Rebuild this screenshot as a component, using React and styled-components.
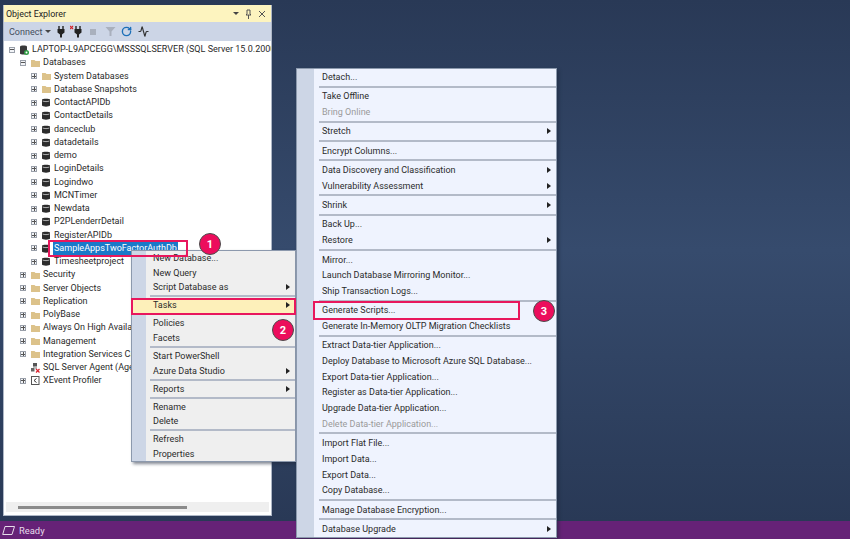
import React from 'react';
import styled, { createGlobalStyle } from 'styled-components';
import { RotateCw, Activity } from 'lucide-react';

const GlobalStyle = createGlobalStyle`
  html, body { margin: 0; padding: 0; height: 100%; overflow: hidden; }
  body { font-family: 'Roboto', 'Open Sans', sans-serif; }
`;

const Page = styled.div`
  position: relative;
  width: 850px;
  height: 539px;
  display: flex;
  flex-direction: column;
  overflow: hidden;
  background: linear-gradient(to bottom, #293956 0, #364b6d 250px, #293956 521px);
`;

const Workspace = styled.div`
  flex: 1;
  min-height: 0;
  padding: 5px 0 5px 3px;
`;

const StatusBar = styled.div`
  height: 18px;
  flex-shrink: 0;
  display: flex;
  align-items: center;
  gap: 4px;
  padding-left: 2px;
  background: #662277;
  color: #e6dcea;
  font-size: 9.4px;
`;

const Panel = styled.div`
  width: 269px;
  height: 100%;
  box-sizing: border-box;
  display: flex;
  flex-direction: column;
  overflow: hidden;
  background: #fff;
  border: 1px solid #aeb7c6;
  border-top: none;
`;

const TitleBar = styled.div`
  height: 17px;
  flex-shrink: 0;
  display: flex;
  align-items: center;
  justify-content: space-between;
  padding: 0 5px 0 2px;
  background: #fdf4bf;
  color: #222;
  font-size: 8.9px;
`;

const TitleButtons = styled.div`
  display: flex;
  align-items: center;
  gap: 6px;
`;

const Toolbar = styled.div`
  height: 19px;
  flex-shrink: 0;
  display: flex;
  align-items: center;
  padding-left: 5px;
  background: #ccd5e6;
  color: #444d5c;
  font-size: 9px;
`;

const ConnectLabel = styled.span`
  width: 43px;
  display: flex;
  align-items: center;
  gap: 3px;
`;

const ToolSlot = styled.span`
  width: 16.6px;
  display: flex;
  align-items: center;
  justify-content: center;
`;

const DropCaret = styled.span`
  width: 0;
  height: 0;
  border-top: 3px solid #444;
  border-left: 3px solid transparent;
  border-right: 3px solid transparent;
`;

const Tree = styled.div`
  flex: 1;
  min-height: 0;
  padding-top: 2px;
  overflow: hidden;
`;

const Row = styled.div`
  height: 13.25px;
  display: flex;
  align-items: center;
  padding-left: ${p => 5 + p.$level * 11}px;
  white-space: nowrap;
  color: #2a2a2a;
  font-size: 9px;
`;

const Expander = styled.span`
  width: 6px;
  height: 6px;
  flex-shrink: 0;
  position: relative;
  box-sizing: border-box;
  border: 1px solid #9aa0aa;
  background: #f2f4f7;
  margin-right: 5px;
  &::before {
    content: '';
    position: absolute;
    left: 0;
    right: 0;
    top: 1.5px;
    height: 1px;
    background: #555;
  }
  &::after {
    content: '';
    display: ${p => (p.$open ? 'none' : 'block')};
    position: absolute;
    top: 0;
    bottom: 0;
    left: 1.5px;
    width: 1px;
    background: #555;
  }
`;

const ExpanderGap = styled.span`
  width: 11px;
  flex-shrink: 0;
`;

const IconSlot = styled.span`
  width: 9px;
  height: 10px;
  flex-shrink: 0;
  margin-right: 2px;
  display: flex;
  align-items: center;
`;

const RowLabel = styled.span`
  padding: 0 1px;
  line-height: 13px;
  ${p => p.$selected && 'background: #1a79c9; color: #fff;'}
`;

const ScrollTrack = styled.div`
  height: 10px;
  flex-shrink: 0;
  margin: 0 2px 3px;
  display: flex;
  align-items: center;
  padding-left: 12px;
  background: #efefef;
`;

const ScrollThumb = styled.div`
  width: 169px;
  height: 3px;
  background: #8b8b8b;
`;

const Menu = styled.div`
  position: absolute;
  left: ${p => p.$left}px;
  top: ${p => p.$top}px;
  width: ${p => p.$width}px;
  box-sizing: border-box;
  color: #2b2b2b;
  font-size: 9px;
  border: 1px solid #8c99ad;
  box-shadow: 2px 2px 3px rgba(30, 40, 60, 0.55);
  background: linear-gradient(
    to right,
    #cdd6e6 0,
    #cdd6e6 ${p => p.$gutter}px,
    ${p => p.$bg} ${p => p.$gutter}px
  );
`;

const MenuItem = styled.div`
  height: ${p => p.$height}px;
  display: flex;
  align-items: center;
  justify-content: space-between;
  box-sizing: border-box;
  padding: 0 5px 0 ${p => p.$indent}px;
  white-space: nowrap;
  color: ${p => (p.$disabled ? '#9a9a9a' : 'inherit')};
  ${p => p.$active && 'background: #fdf0ba;'}
`;

const Separator = styled.div`
  height: 2px;
  margin: ${p => p.$gap}px 0 ${p => p.$gap}px ${p => p.$indent}px;
  background: #b3bac8;
`;

const Arrow = styled.span`
  width: 0;
  height: 0;
  border-left: 4px solid #222;
  border-top: 3.5px solid transparent;
  border-bottom: 3.5px solid transparent;
`;

const Callout = styled.div`
  position: absolute;
  left: ${p => p.$left}px;
  top: ${p => p.$top}px;
  width: ${p => p.$width}px;
  height: ${p => p.$height}px;
  box-sizing: border-box;
  border: 2px solid #e8175d;
  pointer-events: none;
`;

const Badge = styled.div`
  position: absolute;
  left: ${p => p.$x - 11}px;
  top: ${p => p.$y - 11}px;
  width: 22px;
  height: 22px;
  box-sizing: border-box;
  display: flex;
  align-items: center;
  justify-content: center;
  border-radius: 50%;
  border: 1.5px solid #4b4b4b;
  background: #ec0d5c;
  color: #fff;
  font-size: 11px;
  font-weight: 700;
`;

const Folder = () => (
  <svg width="9" height="8" viewBox="0 0 9 8">
    <path d="M0 1h3.5l1 1H9v6H0z" fill="#dcc28a" />
  </svg>
);

const Cylinder = () => (
  <svg width="8" height="9" viewBox="0 0 8 9">
    <path d="M0 1.6C0 .6 8 .6 8 1.6v6c0 1.4-8 1.4-8 0z" fill="#2c2c2c" />
    <path d="M.6 3c1.5.8 5.3.8 6.8 0" fill="none" stroke="#e8e8e8" strokeWidth=".7" />
  </svg>
);

const ServerIcon = () => (
  <svg width="9" height="10" viewBox="0 0 9 10">
    <path d="M0 1.5C0 .3 7 .3 7 1.5v7c0 1.3-7 1.3-7 0z" fill="#3a3a3a" />
    <circle cx="6.5" cy="7.5" r="2.5" fill="#2f9e44" />
    <circle cx="6.5" cy="7.5" r="1" fill="#fff" />
  </svg>
);

const AgentIcon = () => (
  <svg width="9" height="10" viewBox="0 0 9 10">
    <rect x="2" y="0" width="4" height="3.5" fill="#555" />
    <rect x="0" y="5" width="3.5" height="3.5" fill="#666" />
    <path d="M3 3.5v1.5M4 5h2" stroke="#555" strokeWidth=".8" />
    <path d="M5 6l3.5 3.5M8.5 6L5 9.5" stroke="#d9232e" strokeWidth="1.2" />
  </svg>
);

const ProfilerIcon = () => (
  <svg width="9" height="9" viewBox="0 0 9 9">
    <rect x=".5" y=".5" width="7.5" height="8" fill="#fff" stroke="#555" />
    <path d="M5.5 2.5L3 4.5l2.5 2" fill="none" stroke="#333" />
  </svg>
);

const Plug = ({ cut }) => (
  <svg width="14" height="13" viewBox="0 0 14 13">
    {cut && <path d="M0 1l3 3M3 1L0 4" stroke="#d3222a" strokeWidth="1.1" />}
    <path d="M6 1v3M10 1v3" stroke="#222" strokeWidth="1.4" />
    <path d="M4.5 4h7v3.5L9 9.5v3H7v-3L4.5 7.5z" fill="#222" />
  </svg>
);

const StopIcon = () => (
  <svg width="8" height="8" viewBox="0 0 8 8">
    <rect x="1" y="1" width="6" height="6" fill="#a9b0bd" />
  </svg>
);

const FilterIcon = () => (
  <svg width="11" height="11" viewBox="0 0 11 11">
    <path d="M.5 1h10L6.5 5.5V10h-2V5.5z" fill="#a9b0bd" />
  </svg>
);

const PinIcon = () => (
  <svg width="7" height="10" viewBox="0 0 7 10">
    <path d="M2 1h3v4l1 1H1l1-1zM3.5 6v4" fill="none" stroke="#555" />
  </svg>
);

const CloseIcon = () => (
  <svg width="8" height="8" viewBox="0 0 8 8">
    <path d="M1 1l6 6M7 1L1 7" stroke="#555" strokeWidth="1" />
  </svg>
);

const ReadyIcon = () => (
  <svg width="13" height="11" viewBox="0 0 13 11">
    <path d="M3 1.5h9.5L10 9.5H.7z" fill="none" stroke="#e6dcea" />
  </svg>
);

const icons = { folder: Folder, db: Cylinder, server: ServerIcon, agent: AgentIcon, profiler: ProfilerIcon };

const treeRows = [
  { level: 0, icon: 'server', label: 'LAPTOP-L9APCEGG\\MSSSQLSERVER (SQL Server 15.0.2000.5 - LAPTOP', open: true },
  { level: 1, icon: 'folder', label: 'Databases', open: true },
  { level: 2, icon: 'folder', label: 'System Databases' },
  { level: 2, icon: 'folder', label: 'Database Snapshots' },
  { level: 2, icon: 'db', label: 'ContactAPIDb' },
  { level: 2, icon: 'db', label: 'ContactDetails' },
  { level: 2, icon: 'db', label: 'danceclub' },
  { level: 2, icon: 'db', label: 'datadetails' },
  { level: 2, icon: 'db', label: 'demo' },
  { level: 2, icon: 'db', label: 'LoginDetails' },
  { level: 2, icon: 'db', label: 'Logindwo' },
  { level: 2, icon: 'db', label: 'MCNTimer' },
  { level: 2, icon: 'db', label: 'Newdata' },
  { level: 2, icon: 'db', label: 'P2PLenderrDetail' },
  { level: 2, icon: 'db', label: 'RegisterAPIDb' },
  { level: 2, icon: 'db', label: 'SampleAppsTwoFactorAuthDb', selected: true },
  { level: 2, icon: 'db', label: 'Timesheetproject' },
  { level: 1, icon: 'folder', label: 'Security' },
  { level: 1, icon: 'folder', label: 'Server Objects' },
  { level: 1, icon: 'folder', label: 'Replication' },
  { level: 1, icon: 'folder', label: 'PolyBase' },
  { level: 1, icon: 'folder', label: 'Always On High Availability' },
  { level: 1, icon: 'folder', label: 'Management' },
  { level: 1, icon: 'folder', label: 'Integration Services Catalogs' },
  { level: 1, icon: 'agent', label: 'SQL Server Agent (Agent XPs disabled)', leaf: true },
  { level: 1, icon: 'profiler', label: 'XEvent Profiler' },
];

const SEP = { sep: true };

const dbMenu = [
  { label: 'New Database...' },
  { label: 'New Query' },
  { label: 'Script Database as', sub: true },
  SEP,
  { label: 'Tasks', sub: true, active: true },
  SEP,
  { label: 'Policies' },
  { label: 'Facets' },
  SEP,
  { label: 'Start PowerShell' },
  { label: 'Azure Data Studio', sub: true },
  SEP,
  { label: 'Reports', sub: true },
  SEP,
  { label: 'Rename' },
  { label: 'Delete' },
  SEP,
  { label: 'Refresh' },
  { label: 'Properties' },
];

const tasksMenu = [
  { label: 'Detach...' },
  SEP,
  { label: 'Take Offline' },
  { label: 'Bring Online', disabled: true },
  SEP,
  { label: 'Stretch', sub: true },
  SEP,
  { label: 'Encrypt Columns...' },
  SEP,
  { label: 'Data Discovery and Classification', sub: true },
  { label: 'Vulnerability Assessment', sub: true },
  SEP,
  { label: 'Shrink', sub: true },
  SEP,
  { label: 'Back Up...' },
  { label: 'Restore', sub: true },
  SEP,
  { label: 'Mirror...' },
  { label: 'Launch Database Mirroring Monitor...' },
  { label: 'Ship Transaction Logs...' },
  SEP,
  { label: 'Generate Scripts...' },
  { label: 'Generate In-Memory OLTP Migration Checklists' },
  SEP,
  { label: 'Extract Data-tier Application...' },
  { label: 'Deploy Database to Microsoft Azure SQL Database...' },
  { label: 'Export Data-tier Application...' },
  { label: 'Register as Data-tier Application...' },
  { label: 'Upgrade Data-tier Application...' },
  { label: 'Delete Data-tier Application...', disabled: true },
  SEP,
  { label: 'Import Flat File...' },
  { label: 'Import Data...' },
  { label: 'Export Data...' },
  { label: 'Copy Database...' },
  SEP,
  { label: 'Manage Database Encryption...' },
  SEP,
  { label: 'Database Upgrade', sub: true },
];

const ContextMenu = ({ items, left, top, width, gutter, bg, itemHeight, indent, sepIndent, sepGap }) => (
  <Menu $left={left} $top={top} $width={width} $gutter={gutter} $bg={bg}>
    {items.map((item, i) =>
      item.sep ? (
        <Separator key={i} $indent={sepIndent} $gap={sepGap} />
      ) : (
        <MenuItem key={i} $height={itemHeight} $indent={indent} $disabled={item.disabled} $active={item.active}>
          {item.label}
          {item.sub && <Arrow />}
        </MenuItem>
      )
    )}
  </Menu>
);

const App = () => (
  <Page>
    <GlobalStyle />
    <Workspace>
      <Panel>
        <TitleBar>
          Object Explorer
          <TitleButtons>
            <DropCaret />
            <PinIcon />
            <CloseIcon />
          </TitleButtons>
        </TitleBar>
        <Toolbar>
          <ConnectLabel>
            Connect
            <DropCaret />
          </ConnectLabel>
          <ToolSlot><Plug /></ToolSlot>
          <ToolSlot><Plug cut /></ToolSlot>
          <ToolSlot><StopIcon /></ToolSlot>
          <ToolSlot><FilterIcon /></ToolSlot>
          <ToolSlot><RotateCw size={11} color="#1c6fb8" strokeWidth={3} /></ToolSlot>
          <ToolSlot><Activity size={11} color="#333" strokeWidth={2.5} /></ToolSlot>
        </Toolbar>
        <Tree>
          {treeRows.map(row => {
            const Icon = icons[row.icon];
            return (
              <Row key={row.label} $level={row.level}>
                {row.leaf ? <ExpanderGap /> : <Expander $open={row.open} />}
                <IconSlot>
                  <Icon />
                </IconSlot>
                <RowLabel $selected={row.selected}>{row.label}</RowLabel>
              </Row>
            );
          })}
        </Tree>
        <ScrollTrack>
          <ScrollThumb />
        </ScrollTrack>
      </Panel>
    </Workspace>
    <StatusBar>
      <ReadyIcon />
      Ready
    </StatusBar>

    <ContextMenu
      items={dbMenu}
      left={131}
      top={250}
      width={165}
      gutter={14}
      bg="#efefef"
      itemHeight={14.6}
      indent={21}
      sepIndent={18}
      sepGap={0.7}
    />
    <ContextMenu
      items={tasksMenu}
      left={296}
      top={68}
      width={261}
      gutter={17}
      bg="#eff3fe"
      itemHeight={15.7}
      indent={25}
      sepIndent={22}
      sepGap={0.85}
    />

    <Callout $left={48} $top={240} $width={140} $height={17} />
    <Callout $left={131} $top={298} $width={165} $height={17} />
    <Callout $left={313} $top={301} $width={207} $height={19} />
    <Badge $x={210} $y={244}>1</Badge>
    <Badge $x={283} $y={330}>2</Badge>
    <Badge $x={544} $y={311}>3</Badge>
  </Page>
);

export default App;
